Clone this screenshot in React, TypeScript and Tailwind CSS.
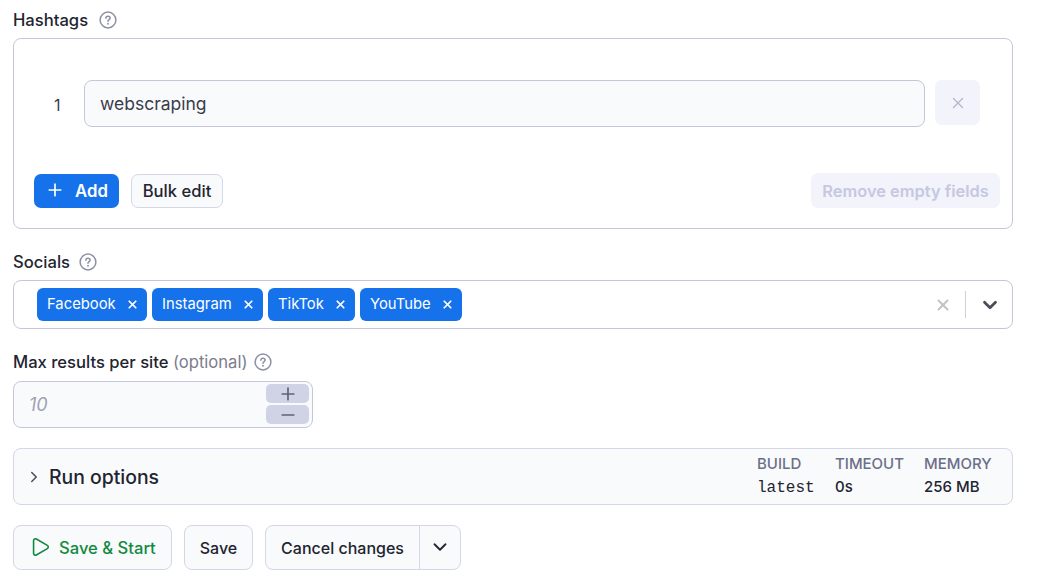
import { ChevronDown, ChevronRight, Minus, Play, Plus, X } from 'lucide-react';

const SOCIALS = [
  { name: 'Facebook', width: 'w-[110px]' },
  { name: 'Instagram', width: 'w-[111px]' },
  { name: 'TikTok', width: 'w-[87px]' },
  { name: 'YouTube', width: 'w-[102px]' },
];

const RUN_INFO = [
  { label: 'BUILD', value: 'latest', width: 'w-[78px]', mono: true },
  { label: 'TIMEOUT', value: '0s', width: 'w-[89px]', mono: false },
  { label: 'MEMORY', value: '256 MB', width: 'w-[88px]', mono: false },
];

function HelpIcon() {
  return (
    <svg width="18" height="18" viewBox="0 0 18 18" fill="none" className="shrink-0">
      <circle cx="9" cy="9" r="7.9" stroke="#8d8fa6" strokeWidth="1.5" />
      <path
        d="M6.9 7.2c0-1.2 1-2 2.1-2s2.1.8 2.1 1.9c0 1.6-2.1 1.6-2.1 3.2"
        stroke="#8d8fa6"
        strokeWidth="1.5"
        strokeLinecap="round"
      />
      <circle cx="9" cy="12.8" r="0.95" fill="#8d8fa6" />
    </svg>
  );
}

export default function App() {
  return (
    <div className="w-[1048px] h-[585px] overflow-hidden bg-white pl-[13px] font-['Inter',sans-serif] text-[#22242f]">
      <div className="w-[1000px]">
        <div className="flex items-center h-[38px] pt-[2px] gap-[11px]">
          <span className="text-[16.6px] font-medium">Hashtags</span>
          <HelpIcon />
        </div>

        <div className="h-[191px] border border-[#c5c6dc] rounded-[8px] px-[20px] pt-[41px]">
          <div className="flex items-start">
            <span className="w-[50px] pl-[20px] pt-[15px] text-[16px] leading-[20px] text-[#3a3c4a]">1</span>
            <div className="w-[841px] h-[47px] flex items-center pl-[15px] pt-[1px] bg-[#f9fafc] border border-[#c5c6dc] rounded-[8px] text-[17.5px] text-[#3a3c4a]">
              webscraping
            </div>
            <div className="ml-[10px] w-[45px] h-[45px] flex items-center justify-center rounded-[7px] bg-[#f2f3fb] text-[#b3b5cc]">
              <X size={18} strokeWidth={1.75} />
            </div>
          </div>
          <div className="flex items-center mt-[46px]">
            <button className="w-[85px] h-[34px] flex items-center pl-[11px] gap-[10px] rounded-[7px] bg-[#1672eb] text-white text-[16.8px] font-semibold">
              <Plus size={20} strokeWidth={2} className="-mt-[1px]" />
              <span className="pt-[2px]">Add</span>
            </button>
            <button className="ml-[12px] w-[92px] h-[34px] flex items-center justify-center pt-[1px] rounded-[7px] border border-[#d5d6e6] bg-[#f9fafc] text-[16.6px] font-medium">
              Bulk edit
            </button>
            <button className="ml-auto -mr-[8px] w-[189px] h-[35px] flex items-center justify-center pt-[2px] rounded-[7px] bg-[#f2f3fb] text-[#c5c8df] text-[16.4px] font-semibold">
              Remove empty fields
            </button>
          </div>
        </div>

        <div className="flex items-center h-[51px] pt-[15px] gap-[9px]">
          <span className="text-[16.6px] font-medium">Socials</span>
          <HelpIcon />
        </div>

        <div className="h-[49px] flex items-center border border-[#c5c6dc] rounded-[8px] pl-[23px] pr-[10px]">
          <div className="flex gap-[5px] flex-1">
            {SOCIALS.map((s) => (
              <div
                key={s.name}
                className={`${s.width} h-[33px] flex items-center justify-between pl-[10px] pr-[8px] rounded-[6px] bg-[#1672eb] text-white text-[14.8px]`}
              >
                <span className="-mt-[1px]">{s.name}</span>
                <X size={13} strokeWidth={3.25} />
              </div>
            ))}
          </div>
          <X size={18} strokeWidth={2.75} className="text-[#c4c4c4]" />
          <div className="w-px h-[27px] bg-[#d0d0d8] mx-[13px]" />
          <ChevronDown size={22} strokeWidth={3} className="text-[#4a4c5c] mr-[1px]" />
        </div>

        <div className="flex items-center h-[52px] pt-[14px] gap-[6px]">
          <span className="text-[16.6px] font-medium">
            Max results per site <span className="font-normal text-[#7b7d8c]">(optional)</span>
          </span>
          <HelpIcon />
        </div>

        <div className="relative w-[300px] h-[47px] flex items-center pl-[15px] bg-[#f9fafc] border border-[#c5c6dc] rounded-[8px] text-[18px] italic text-[#a0a2b2]">
          10
          <div className="absolute right-[3px] top-[2px] flex flex-col gap-[2px]">
            <div className="w-[43px] h-[19px] flex items-center justify-center rounded-[5px] bg-[#d0d3e6] text-[#5f6174]">
              <Plus size={20} strokeWidth={2} />
            </div>
            <div className="w-[43px] h-[19px] flex items-center justify-center rounded-[5px] bg-[#d0d3e6] text-[#5f6174]">
              <Minus size={20} strokeWidth={2} />
            </div>
          </div>
        </div>

        <div className="mt-[20px] h-[57px] flex items-center bg-[#f9fafc] border border-[#d5d6e6] rounded-[8px] pl-[11px]">
          <ChevronRight size={18} strokeWidth={2} className="text-[#4a4c5c]" />
          <span className="ml-[6px] pt-[2px] text-[19.4px] font-medium flex-1">Run options</span>
          <div className="flex h-[43px] -mt-[2px]">
            {RUN_INFO.map((info) => (
              <div key={info.label} className={`${info.width} leading-none`}>
                <div className="text-[15px] font-medium text-[#6b6f88] leading-[20px]">{info.label}</div>
                <div
                  className={
                    info.mono
                      ? "font-['Liberation_Mono',monospace] text-[16px] leading-[29px] text-[#22242f]"
                      : 'text-[15px] font-medium leading-[25px] text-[#22242f]'
                  }
                >
                  {info.value}
                </div>
              </div>
            ))}
          </div>
        </div>

        <div className="mt-[20px] flex text-[16px] font-medium">
          <button className="w-[159px] h-[45px] flex items-center pl-[15px] gap-[8px] bg-[#f9fafc] border border-[#d5d6e6] rounded-[8px] text-[#118a3e] text-[16.6px]">
            <Play size={22} strokeWidth={1.75} className="-mt-[2px]" />
            <span className="pt-[2px]">Save &amp; Start</span>
          </button>
          <button className="ml-[12px] w-[69px] h-[45px] flex items-center justify-center bg-[#f9fafc] border border-[#d5d6e6] rounded-[8px]">
            Save
          </button>
          <div className="ml-[12px] h-[45px] flex bg-[#f9fafc] border border-[#d5d6e6] rounded-[8px]">
            <button className="w-[154px] flex items-center justify-center border-r border-[#d5d6e6]">Cancel changes</button>
            <button className="w-[40px] flex items-center justify-center">
              <ChevronDown size={22} strokeWidth={2} className="-mt-[2px]" />
            </button>
          </div>
        </div>
      </div>
    </div>
  );
}
